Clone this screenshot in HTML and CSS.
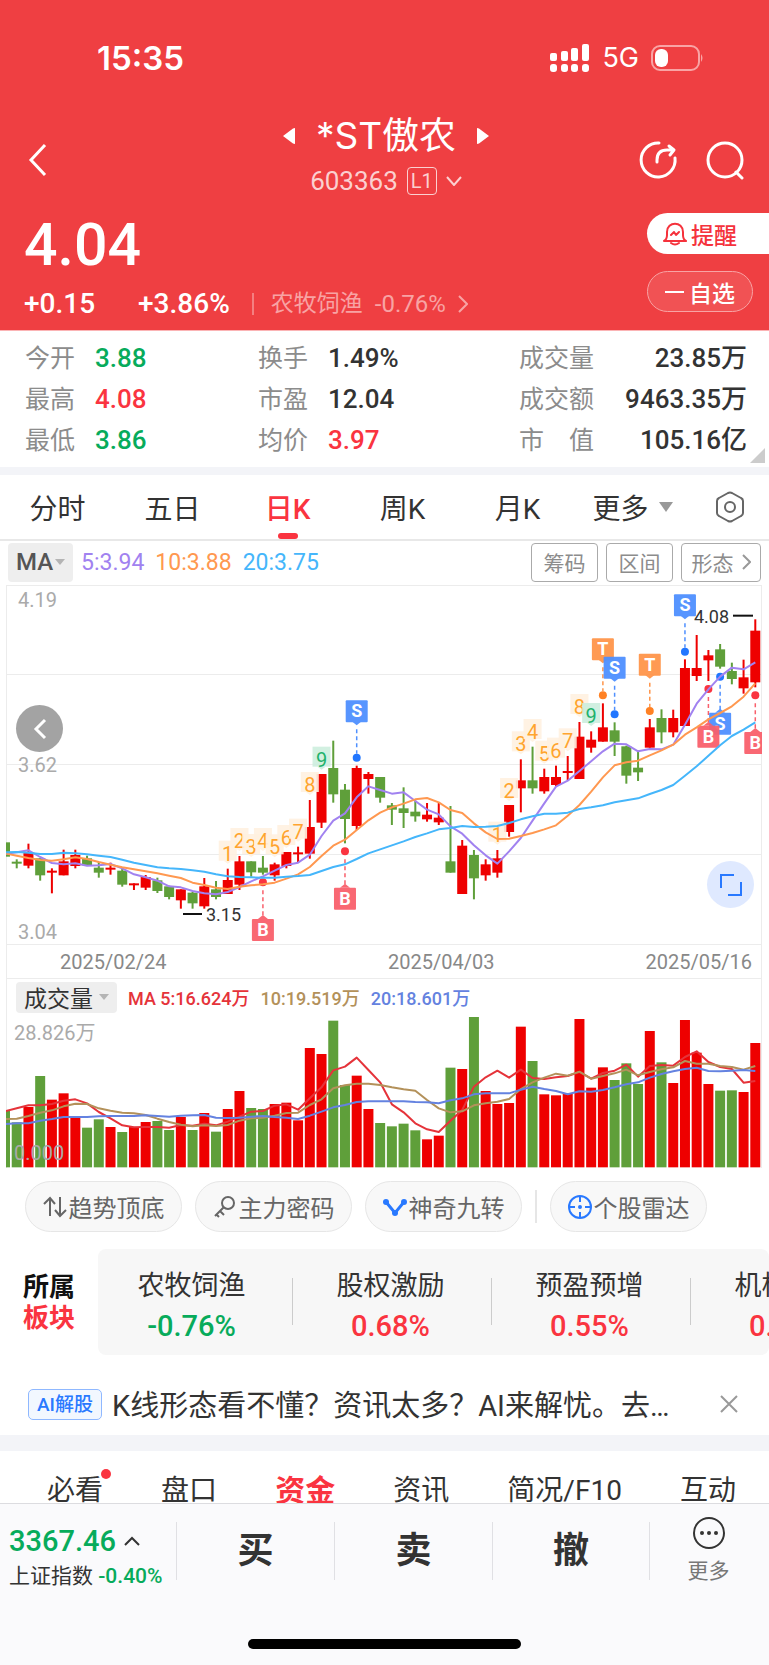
FILE: index.html
```html
<!DOCTYPE html>
<html lang="zh-CN">
  <head>
    <meta charset="utf-8" />
    <meta name="viewport" content="width=device-width, initial-scale=1.0" />
    <title>*ST傲农 603363</title>
    <link rel="stylesheet" href="styles.css">
  </head>
  <body>
    <header class="header">
      <div class="status-bar">
        <span class="clock">15:35</span>
        <div class="status-icons">
          <svg width="40" height="28" viewBox="0 0 40 28" fill="#fff">
            <rect x="0" y="9" width="7" height="8" rx="2" />
            <rect x="11" y="7" width="7" height="10" rx="2" />
            <rect x="21" y="4" width="7" height="13" rx="2" />
            <rect x="32" y="0" width="7" height="17" rx="2" />
            <rect x="0" y="20" width="7" height="8" rx="3" />
            <rect x="11" y="20" width="7" height="8" rx="3" />
            <rect x="21" y="20" width="7" height="8" rx="3" />
            <rect x="32" y="20" width="7" height="8" rx="3" />
          </svg>
          <span class="network">5G</span>
          <svg width="54" height="28" viewBox="0 0 54 28">
            <rect x="1" y="2" width="47" height="24" rx="8" fill="none" stroke="#f9a4a5" stroke-width="2" />
            <rect x="4" y="5" width="13" height="18" rx="6" fill="#fff" />
            <path d="M50 10q3 4 0 8z" fill="#f9a4a5" />
          </svg>
        </div>
      </div>

      <nav class="nav">
        <button type="button" class="icon-button" aria-label="返回">
          <svg width="22" height="36" viewBox="0 0 22 36"><path d="M18 3L4 18l14 15" fill="none" stroke="#fff" stroke-width="3" /></svg>
        </button>
        <div class="title">
          <div class="title-name">
            <svg width="14" height="18" viewBox="0 0 14 18"><path d="M13 1v16q-2 0-4-2L1 9l8-6q2-2 4-2z" fill="#fff" /></svg>
            <h1>*ST傲农</h1>
            <svg width="14" height="18" viewBox="0 0 14 18"><path d="M1 1v16q2 0 4-2l8-6-8-6q-2-2-4-2z" fill="#fff" /></svg>
          </div>
          <div class="title-code">
            <span>603363</span>
            <span class="level">L1</span>
            <svg width="16" height="10" viewBox="0 0 16 10"><path d="M1 1l7 8 7-8" fill="none" stroke="#fbd0d0" stroke-width="2" /></svg>
          </div>
        </div>
        <div class="nav-actions">
          <button type="button" class="icon-button" aria-label="分享">
            <svg width="40" height="40" viewBox="0 0 40 40" fill="none" stroke="#fff" stroke-width="3" stroke-linecap="round" stroke-linejoin="round">
              <path d="M21 3A17 17 0 1 0 37 18" />
              <path d="M19 22v-2c0-7 4-10 10-10h6M31 6l5 4-4 5" />
            </svg>
          </button>
          <button type="button" class="icon-button" aria-label="搜索">
            <svg width="40" height="40" viewBox="0 0 40 40" fill="none" stroke="#fff" stroke-width="3" stroke-linecap="round">
              <circle cx="20" cy="20" r="17" />
              <path d="M31 32l6 6" />
            </svg>
          </button>
        </div>
      </nav>

      <div class="quote">
        <div class="quote-main">
          <div class="price">4.04</div>
          <div class="change">
            <span>+0.15</span>
            <span class="change-rate">+3.86%</span>
            <a href="#sector" class="industry">
              农牧饲渔 <span class="industry-rate">-0.76%</span>
              <svg width="10" height="18" viewBox="0 0 10 18"><path d="M1 1l8 8-8 8" fill="none" stroke="#f8a3a4" stroke-width="2" /></svg>
            </a>
          </div>
        </div>
        <div class="quote-actions">
          <button type="button" class="remind">
            <svg width="24" height="24" viewBox="0 0 24 24" fill="none" stroke="#f5323c" stroke-width="2" stroke-linejoin="round" stroke-linecap="round">
              <path d="M1 19c2-1 3-3 3-6v-3c0-11 16-11 16 0v3c0 3 1 5 3 6z" />
              <path d="M8 21q4 3 8 0M8 13l3-3 2 3 3-3" />
            </svg>
            提醒
          </button>
          <button type="button" class="watch">
            <svg width="20" height="20" viewBox="0 0 20 20"><path d="M0 10h19" stroke="#fff" stroke-width="2" /></svg>
            自选
          </button>
        </div>
      </div>
    </header>

    <main>
      <section class="stats">
        <dl>
          <dt>今开</dt><dd class="down">3.88</dd>
          <dt>最高</dt><dd class="up">4.08</dd>
          <dt>最低</dt><dd class="down">3.86</dd>
        </dl>
        <dl>
          <dt>换手</dt><dd>1.49%</dd>
          <dt>市盈</dt><dd>12.04</dd>
          <dt>均价</dt><dd class="up">3.97</dd>
        </dl>
        <dl class="stats-right">
          <dt>成交量</dt><dd>23.85万</dd>
          <dt>成交额</dt><dd>9463.35万</dd>
          <dt>市　值</dt><dd>105.16亿</dd>
        </dl>
      </section>

      <div class="period-tabs">
        <button type="button">分时</button>
        <button type="button">五日</button>
        <button type="button" class="active">日K</button>
        <button type="button">周K</button>
        <button type="button">月K</button>
        <button type="button">更多<span class="triangle"></span></button>
        <button type="button" aria-label="设置">
          <svg width="30" height="32" viewBox="0 0 30 32" fill="none" stroke="#666" stroke-width="2" stroke-linejoin="round">
            <path d="M13 2q2-1 4 0l9 5q2 1 2 3v12q0 2-2 3l-9 5q-2 1-4 0l-9-5q-2-1-2-3V10q0-2 2-3z" />
            <circle cx="15" cy="16" r="5" />
          </svg>
        </button>
      </div>

      <section class="chart">
        <div class="chart-bar">
          <button type="button" class="indicator">MA<span class="triangle small"></span></button>
          <div class="averages">
            <span class="ma5">5:3.94</span>
            <span class="ma10">10:3.88</span>
            <span class="ma20">20:3.75</span>
          </div>
          <div class="chart-tools">
            <button type="button">筹码</button>
            <button type="button">区间</button>
            <button type="button" class="wide">形态
              <svg width="9" height="16" viewBox="0 0 9 16"><path d="M1 1l7 7-7 7" fill="none" stroke="#999" stroke-width="2" /></svg>
            </button>
          </div>
        </div>
        <div class="kline">
          <svg id="kline" viewBox="0 0 769 394"></svg>
          <button type="button" class="round-button prev" aria-label="向前">
            <svg width="14" height="24" viewBox="0 0 14 24"><path d="M12 3L3 12l9 9" fill="none" stroke="#fff" stroke-width="3" /></svg>
          </button>
          <button type="button" class="round-button expand" aria-label="全屏">
            <svg width="22" height="22" viewBox="0 0 22 22"><path d="M1 14V1h13M8 21h13V8" fill="none" stroke="#2979ff" stroke-width="2" /></svg>
          </button>
        </div>
        <div class="volume-bar">
          <button type="button" class="indicator">成交量<span class="triangle small"></span></button>
          <span class="vol5">MA 5:16.624万</span>
          <span class="vol10">10:19.519万</span>
          <span class="vol20">20:18.601万</span>
        </div>
        <svg id="volume" viewBox="0 0 769 151"></svg>
      </section>

      <div class="tools">
        <button type="button">
          <svg width="24" height="24" viewBox="0 0 24 24" fill="none" stroke="#666" stroke-width="2"><path d="M7 21V3M1 9l6-6 5 6M17 2v18M12 15l5 6 6-6" /></svg>
          趋势顶底
        </button>
        <button type="button">
          <svg width="24" height="24" viewBox="0 0 24 24" fill="none" stroke="#666" stroke-width="2"><circle cx="15" cy="8" r="6" /><path d="M11 12L2 21M7 16l4 4M3 19l3 3" /></svg>
          主力密码
        </button>
        <button type="button">
          <svg width="24" height="24" viewBox="0 0 24 24" fill="#2979ff"><path d="M3 7l9 11 9-11" fill="none" stroke="#2979ff" stroke-width="3" /><circle cx="3" cy="7" r="3" /><circle cx="12" cy="18" r="3" /><circle cx="21" cy="7" r="3" /></svg>
          神奇九转
        </button>
        <span class="tools-line"></span>
        <button type="button">
          <svg width="24" height="24" viewBox="0 0 24 24" fill="none" stroke="#2979ff" stroke-width="2"><circle cx="12" cy="12" r="11" /><path d="M12 1v6M12 17v6M1 12h6M17 12h6" /><circle cx="12" cy="12" r="1" /></svg>
          个股雷达
        </button>
      </div>

      <section class="sector" id="sector">
        <h2>所属<em>板块</em></h2>
        <div class="sector-list">
          <a href="#sector">农牧饲渔<span class="down">-0.76%</span></a>
          <a href="#sector">股权激励<span class="up">0.68%</span></a>
          <a href="#sector">预盈预增<span class="up">0.55%</span></a>
          <a href="#sector">机构重仓<span class="up">0.31%</span></a>
        </div>
      </section>

      <div class="ai">
        <span class="ai-tag">AI解股</span>
        <a href="#ai" class="ai-text">K线形态看不懂？资讯太多？AI来解忧。去…</a>
        <button type="button" class="icon-button" aria-label="关闭">
          <svg width="18" height="18" viewBox="0 0 18 18"><path d="M1 1l16 16M17 1L1 17" stroke="#999" stroke-width="2" /></svg>
        </button>
      </div>

      <nav class="info-tabs">
        <a href="#must" class="has-dot">必看</a>
        <a href="#depth">盘口</a>
        <a href="#funds" class="active">资金</a>
        <a href="#news">资讯</a>
        <a href="#profile">简况/F10</a>
        <a href="#talk">互动</a>
      </nav>
    </main>

    <footer class="footer">
      <div class="trade-bar">
        <a href="#index" class="index">
          <span class="index-value">3367.46
            <svg width="16" height="10" viewBox="0 0 16 10"><path d="M1 9l7-7 7 7" fill="none" stroke="#333" stroke-width="2" /></svg>
          </span>
          <span class="index-name">上证指数 <span class="index-rate down">-0.40%</span></span>
        </a>
        <button type="button" class="trade">买</button>
        <button type="button" class="trade">卖</button>
        <button type="button" class="trade">撤</button>
        <button type="button" class="more">
          <svg width="34" height="34" viewBox="0 0 34 34" fill="#333"><circle cx="17" cy="17" r="15" fill="none" stroke="#333" stroke-width="2" /><circle cx="10" cy="17" r="2" /><circle cx="17" cy="17" r="2" /><circle cx="24" cy="17" r="2" /></svg>
          更多
        </button>
      </div>
      <div class="home-indicator"></div>
    </footer>
    <script src="chart.js"></script>
  </body>
</html>
```

FILE: styles.css
```css
:root {
  --red: #fa3440;
  --green: #07ab5b;
  --header: #ef3f42;
  --text: #333;
  --gray: #8c8c8c;
  --line: #ececec;
  --band: #f3f4f8;
}

* {
  box-sizing: border-box;
}

body {
  margin: 0;
  font-family: Roboto, "Noto Sans CJK SC", sans-serif;
  font-size: 24px;
  color: var(--text);
  background-color: #fff;
}

button {
  font: inherit;
  color: inherit;
  background: none;
  border: none;
  padding: 0;
  cursor: pointer;
}

a {
  color: inherit;
  text-decoration: none;
}

svg {
  display: block;
  flex: none;
}

.up {
  color: var(--red);
}

.down {
  color: var(--green);
}

.triangle {
  border: 7px solid transparent;
  border-top: 10px solid #999;
  border-bottom: 0;
  margin-left: 10px;
}

.triangle.small {
  border-width: 5px;
  border-top-width: 6px;
  border-bottom: 0;
  border-top-color: #b4b4b4;
  margin-left: 2px;
}

/* header */
.header {
  background-color: var(--header);
  color: #fff;
  border-bottom: 1px solid #fbb4b5;
}

.status-bar {
  display: flex;
  justify-content: space-between;
  align-items: center;
  height: 112px;
  padding: 3px 64px 0 97px;
}

.clock {
  font-family: Inter, sans-serif;
  font-size: 33px;
  font-weight: 600;
}

.status-icons {
  display: flex;
  align-items: center;
  gap: 12px;
}

.network {
  font-family: Inter, sans-serif;
  font-size: 27px;
}

.nav {
  display: grid;
  grid-template-columns: 1fr auto 1fr;
  align-items: center;
  padding: 0 24px 0 27px;
}

.icon-button {
  display: flex;
}

.nav > .icon-button,
.nav-actions {
  padding-top: 5px;
}

.title-name,
.title-code {
  display: flex;
  justify-content: center;
  align-items: center;
}

.title-name {
  gap: 20px;
  height: 47px;
}

h1 {
  margin: 0;
  font-family: Inter, "Noto Sans CJK SC", sans-serif;
  font-size: 37px;
  font-weight: 400;
  line-height: 47px;
}

.title-code {
  gap: 9px;
  height: 43px;
  font-size: 26px;
  color: #fbd0d0;
}

.level {
  border: 1px solid #fbd0d0;
  border-radius: 4px;
  width: 30px;
  font-size: 20px;
  line-height: 26px;
  text-align: center;
}

.nav-actions {
  display: flex;
  justify-content: flex-end;
  gap: 27px;
}

.quote {
  display: flex;
  justify-content: space-between;
  height: 128px;
}

.quote-main {
  padding: 5px 0 0 24px;
}

.price {
  font-size: 59px;
  font-weight: 500;
  line-height: 76px;
}

.change {
  display: flex;
  align-items: center;
  font-size: 28px;
  font-weight: 500;
  line-height: 42px;
}

.change-rate {
  margin-left: 43px;
}

.industry {
  display: flex;
  align-items: center;
  gap: 12px;
  margin-left: 22px;
  padding-left: 17px;
  border-left: 2px solid #f47f81;
  font-size: 23px;
  font-weight: 400;
  line-height: 22px;
  color: #f8a3a4;
}

.industry-rate {
  font-size: 24px;
}

.quote-actions {
  width: 122px;
  padding-top: 11px;
}

.remind,
.watch {
  display: flex;
  align-items: center;
  gap: 4px;
  height: 41px;
  font-size: 23px;
  font-weight: 500;
}

.remind {
  width: 100%;
  padding-left: 16px;
  border-radius: 21px 0 0 21px;
  background-color: #fff;
  color: #f5323c;
}

.watch {
  width: 106px;
  margin-top: 17px;
  padding-left: 17px;
  border: 1px solid #f8a3a4;
  border-radius: 21px;
  background-color: #f15254;
}

/* stats */
.stats {
  position: relative;
  display: grid;
  grid-template-columns: 233fr 261fr 228fr;
  padding: 7px 22px 6px 25px;
  border-bottom: 8px solid var(--band);
}

.stats::after {
  content: "";
  position: absolute;
  right: 4px;
  bottom: 4px;
  border-left: 15px solid transparent;
  border-bottom: 15px solid #ccc;
}

.stats dl {
  display: grid;
  grid-template-columns: 70px 1fr;
  margin: 0;
  line-height: 41px;
}

.stats dt {
  font-size: 25px;
  color: var(--gray);
}

.stats dd {
  margin: 0;
  font-size: 26px;
  font-weight: 500;
}

.stats .stats-right {
  grid-template-columns: auto 1fr;
}

.stats-right dd {
  text-align: right;
}

/* period tabs */
.period-tabs {
  display: grid;
  grid-template-columns: repeat(6, 115fr) 79fr;
  height: 66px;
  border-bottom: 2px solid #e8e8e8;
  font-size: 28px;
}

.period-tabs button {
  position: relative;
  display: flex;
  align-items: center;
  justify-content: center;
}

.period-tabs .active {
  color: var(--red);
  font-weight: 500;
}

.period-tabs .active::after {
  content: "";
  position: absolute;
  bottom: 0;
  width: 20px;
  height: 6px;
  border-radius: 3px;
  background-color: var(--red);
}

/* charts */
.chart-bar {
  display: flex;
  align-items: center;
  height: 44px;
  padding: 0 8px 2px;
}

.indicator {
  display: flex;
  align-items: center;
  justify-content: center;
  border-radius: 4px;
  background-color: #eee;
}

.chart-bar .indicator {
  width: 65px;
  height: 39px;
  color: #555;
  font-weight: 500;
}

.averages {
  display: flex;
  gap: 11px;
  margin-left: 8px;
  font-size: 23px;
}

.ma5 {
  color: #a182f0;
}

.ma10 {
  color: #ff9850;
}

.ma20 {
  color: #45b6fb;
}

.chart-tools {
  display: flex;
  gap: 8px;
  margin-left: auto;
}

.chart-tools button {
  display: flex;
  align-items: center;
  justify-content: center;
  gap: 8px;
  width: 67px;
  height: 39px;
  border: 1px solid #aaa;
  border-radius: 4px;
  font-size: 21px;
  color: var(--gray);
}

.chart-tools .wide {
  width: 80px;
}

.kline {
  position: relative;
}

#kline,
#volume {
  width: 100%;
}

.round-button {
  position: absolute;
  display: flex;
  align-items: center;
  justify-content: center;
  width: 47px;
  height: 47px;
  border-radius: 50%;
}

.prev {
  left: 16px;
  top: 120px;
  background-color: #a3a3a3;
}

.expand {
  right: 15px;
  bottom: 71px;
  background-color: #dfe9ff;
}

.volume-bar {
  display: flex;
  align-items: center;
  gap: 11px;
  height: 38px;
  margin: 0 7px 0 6px;
  padding: 0 9px 2px;
  border-left: 1px solid var(--line);
  border-right: 1px solid var(--line);
  font-size: 18px;
  font-weight: 500;
}

.volume-bar .indicator {
  width: 101px;
  height: 31px;
  font-size: 23px;
  font-weight: 400;
}

.volume-bar .triangle {
  margin-left: 6px;
}

.vol5 {
  color: #e5333a;
}

.vol10 {
  color: #b3915a;
}

.vol20 {
  color: #6482e0;
}

/* tool pills */
.tools {
  display: flex;
  gap: 13px;
  padding: 13px 25px 17px;
}

.tools button {
  display: flex;
  align-items: center;
  justify-content: center;
  gap: 2px;
  width: 157px;
  height: 51px;
  border: 1px solid #e6e6e6;
  border-radius: 26px;
  background-color: #f8f8f8;
  color: #666;
}

.tools-line {
  width: 2px;
  margin: 9px 0;
  background-color: #e6e6e6;
}

/* sector */
.sector {
  display: flex;
  align-items: center;
}

.sector h2 {
  flex: none;
  width: 98px;
  margin: 0;
  padding: 2px 0 0 23px;
  font-size: 26px;
  line-height: 31px;
  color: #111;
}

.sector em {
  display: block;
  font-style: normal;
  color: var(--red);
}

.sector-list {
  display: flex;
  flex: 1;
  overflow: hidden;
  padding: 17px 0 10px;
  border-radius: 8px;
  background-color: #f7f7f7;
}

.sector-list a {
  position: relative;
  flex: none;
  width: 199px;
  padding-right: 12px;
  text-align: center;
  font-size: 27px;
  line-height: 41px;
}

.sector-list a + a::before {
  content: "";
  position: absolute;
  left: -5px;
  top: 12px;
  height: 47px;
  border-left: 1px solid #ccc;
}

.sector-list span {
  display: block;
  font-size: 29px;
  font-weight: 500;
  line-height: 38px;
}

.ai {
  display: flex;
  align-items: center;
  height: 80px;
  padding: 18px 31px 0 28px;
}

.ai-tag {
  width: 74px;
  border: 1px solid #8fb8ff;
  border-radius: 5px;
  background-color: #f2f7ff;
  color: #2979ff;
  font-size: 19px;
  font-weight: 500;
  line-height: 29px;
  text-align: center;
}

.ai-text {
  flex: 1;
  margin-left: 10px;
  padding-top: 4px;
  font-size: 29px;
  line-height: 40px;
  white-space: nowrap;
}

.info-tabs {
  display: flex;
  justify-content: space-between;
  height: 68px;
  padding: 18px 33px 0 47px;
  border-top: 16px solid var(--band);
  overflow: hidden;
  font-size: 28px;
  line-height: 44px;
}

.info-tabs .active {
  color: var(--red);
  font-size: 30px;
  font-weight: 700;
}

.has-dot {
  position: relative;
}

.has-dot::after {
  content: "";
  position: absolute;
  right: -8px;
  top: 0;
  width: 10px;
  height: 10px;
  border-radius: 50%;
  background-color: var(--red);
}

/* footer */
.footer {
  height: 162px;
  border-top: 1px solid #dcdce0;
  background-color: #fafafc;
}

.trade-bar {
  display: grid;
  grid-template-columns: 176fr 158fr 158fr 157fr 120fr;
  height: 96px;
  padding-top: 18px;
}

.trade-bar > * + * {
  height: 58px;
  border-left: 1px solid #e0e0e4;
}

.index {
  padding-left: 9px;
}

.index-value {
  display: flex;
  align-items: center;
  gap: 8px;
  font-size: 29px;
  font-weight: 500;
  line-height: 38px;
  color: var(--green);
}

.index-name {
  display: block;
  font-size: 21px;
  line-height: 32px;
  white-space: nowrap;
}

.index-rate {
  font-weight: 500;
}

.trade {
  font-size: 36px;
  font-weight: 700;
  line-height: 58px;
}

.more {
  display: flex;
  flex-direction: column;
  align-items: center;
  justify-content: center;
  gap: 6px;
  padding-right: 2px;
  font-size: 21px;
  line-height: 30px;
  color: #777;
}

.home-indicator {
  width: 273px;
  height: 10px;
  margin: 39px auto 0;
  border-radius: 5px;
  background-color: #000;
}
```

FILE: chart.js
```js
const RED = '#ee0000';
const GREEN = '#5f9f3a';
const STEP = 35.17;
const FIRST = 15;

// color, high, body top, body bottom, low (three units to a pixel)
const candles = [
  ['g', 787, 787, 830, 830], ['g', 838, 845, 849, 865], ['r', 791, 818, 857, 865], ['g', 835, 835, 886, 902],
  ['r', 865, 872, 877, 940], ['r', 809, 844, 886, 886], ['r', 809, 825, 858, 865], ['g', 827, 835, 856, 856],
  ['g', 846, 863, 878, 893], ['r', 848, 863, 867, 884], ['g', 865, 872, 914, 920], ['r', 910, 910, 914, 930],
  ['r', 885, 891, 923, 930], ['g', 893, 901, 933, 939], ['g', 917, 919, 951, 958], ['r', 928, 928, 961, 986],
  ['g', 936, 938, 970, 986], ['r', 894, 919, 979, 986], ['g', 903, 928, 951, 958], ['r', 866, 900, 942, 942],
  ['r', 828, 844, 914, 930], ['g', 844, 844, 877, 890], ['g', 828, 863, 878, 884], ['r', 848, 853, 886, 902],
  ['r', 816, 816, 858, 865], ['r', 800, 817, 821, 848], ['r', 660, 741, 821, 836], ['r', 582, 582, 728, 744],
  ['g', 482, 564, 643, 668], ['g', 612, 629, 717, 790], ['r', 557, 564, 738, 750], ['r', 576, 582, 597, 641],
  ['g', 591, 591, 653, 668], ['g', 669, 676, 689, 735], ['g', 622, 685, 699, 744], ['g', 662, 695, 709, 725],
  ['r', 669, 704, 718, 725], ['r', 667, 713, 727, 735], ['g', 678, 844, 878, 878], ['r', 780, 797, 942, 942],
  ['g', 810, 825, 895, 958], ['r', 838, 853, 886, 902], ['r', 810, 835, 878, 893], ['r', 675, 675, 756, 770],
  ['r', 538, 601, 625, 697], ['g', 500, 601, 625, 641], ['r', 566, 591, 634, 641], ['r', 557, 591, 615, 621],
  ['r', 528, 573, 577, 600], ['r', 426, 470, 597, 597], ['r', 454, 479, 503, 518], ['r', 370, 442, 485, 485],
  ['g', 427, 451, 485, 528], ['g', 497, 499, 587, 611], ['g', 512, 563, 577, 603], ['r', 417, 442, 503, 503],
  ['g', 388, 414, 457, 490], ['r', 389, 414, 457, 472], ['r', 238, 264, 438, 438], ['r', 165, 264, 288, 303],
  ['r', 210, 226, 241, 303], ['g', 192, 208, 260, 266], ['g', 248, 273, 297, 313], ['r', 239, 292, 325, 341],
  ['r', 118, 152, 307, 322]
];

const priceLines = {
  '#a182f0': [822, 817, 811, 831, 849, 853, 850, 857, 856, 852, 865, 883, 892, 902, 919, 922, 933, 940, 943, 936, 921, 904, 889, 872, 855, 848, 824, 768, 722, 700, 652, 619, 630, 641, 637, 663, 689, 703, 739, 761, 796, 826, 851, 814, 774, 722, 670, 620, 602, 573, 544, 514, 491, 493, 514, 507, 508, 494, 434, 371, 328, 290, 263, 268, 247],
  '#ff9850': [820, 827, 834, 840, 842, 838, 832, 837, 846, 854, 862, 868, 874, 880, 887, 894, 908, 915, 923, 927, 920, 916, 913, 908, 896, 883, 861, 828, 797, 779, 750, 721, 698, 682, 671, 658, 654, 667, 690, 699, 730, 757, 777, 776, 768, 759, 748, 736, 707, 675, 635, 592, 556, 547, 542, 526, 511, 494, 464, 442, 418, 399, 379, 350, 310],
  '#45b6fb': [817, 816, 818, 822, 822, 818, 820, 823, 827, 831, 839, 848, 855, 862, 865, 867, 871, 875, 883, 889, 891, 892, 893, 893, 890, 888, 885, 873, 861, 853, 837, 820, 808, 796, 784, 771, 760, 748, 744, 738, 741, 740, 738, 729, 718, 709, 701, 701, 698, 687, 682, 676, 667, 661, 655, 642, 630, 615, 587, 559, 527, 496, 468, 449, 427]
};

const volumes = [407, 442, 396, 303, 374, 355, 428, 458, 433, 456, 471, 456, 441, 438, 465, 426, 465, 414, 470, 402, 348, 399, 402, 387, 383, 436, 219, 237, 137, 330, 302, 402, 444, 454, 446, 466, 493, 482, 278, 282, 126, 348, 387, 384, 155, 258, 358, 361, 355, 132, 338, 277, 315, 265, 327, 168, 262, 324, 135, 233, 327, 347, 346, 351, 204];

const volumeLines = {
  '#e5333a': [409, 400, 391, 391, 387, 377, 373, 385, 411, 430, 451, 457, 456, 456, 458, 450, 452, 446, 451, 440, 425, 410, 408, 392, 388, 404, 370, 337, 286, 275, 248, 285, 322, 388, 412, 445, 463, 471, 437, 405, 335, 307, 287, 308, 284, 309, 312, 307, 303, 291, 311, 294, 287, 269, 305, 273, 270, 272, 246, 229, 261, 276, 282, 323, 318],
  '#b3915a': [432, 431, 423, 413, 406, 394, 386, 387, 400, 407, 413, 415, 420, 431, 441, 449, 454, 451, 453, 450, 437, 430, 428, 422, 414, 413, 390, 373, 340, 331, 326, 326, 330, 337, 343, 347, 375, 400, 412, 409, 391, 385, 380, 372, 342, 322, 308, 296, 302, 290, 311, 303, 295, 284, 301, 291, 283, 277, 258, 266, 266, 273, 276, 284, 273],
  '#6482e0': [447, 445, 445, 437, 432, 426, 426, 426, 424, 423, 423, 423, 421, 423, 425, 422, 421, 420, 428, 429, 428, 425, 423, 426, 428, 432, 422, 410, 397, 390, 381, 379, 379, 379, 379, 381, 382, 385, 376, 370, 358, 355, 355, 355, 344, 335, 342, 348, 358, 349, 350, 345, 337, 328, 322, 308, 297, 289, 282, 278, 288, 289, 287, 285, 288]
};

// candle index, count, top of the tag
const counts = [
  [19, 1, 782], [20, 2, 744], [21, 3, 762], [22, 4, 744], [23, 5, 763], [24, 6, 735], [25, 7, 716], [26, 8, 576], [27, 9, 500],
  [42, 1, 725], [43, 2, 594], [44, 3, 454], [45, 4, 417], [46, 5, 482], [47, 6, 473], [48, 7, 445], [49, 8, 342], [50, 9, 369]
];

// candle index, letter, top of the label, dot
const signals = [
  [22, 'B', 1017, 907], [29, 'B', 923, 814], [30, 'S', 361, 533], [51, 'T', 175, 346], [52, 'S', 230, 403],
  [55, 'T', 221, 393], [58, 'S', 43, 215], [61, 'S', 398, 290], [60, 'B', 437, 327], [64, 'B', 456, 346]
];

const signalColors = {
  B: ['#f9606c', '#fa3440'],
  S: ['#4f90ff', '#2176ff'],
  T: ['#ff954a', '#ff8124']
};

const centerX = (i) => (FIRST + STEP * i) / 3;

function rect(x, y, width, height, fill, extra = '') {
  return `<rect x="${x}" y="${y}" width="${width}" height="${height}" fill="${fill}" ${extra}/>`;
}

function text(x, y, size, fill, content, extra = '') {
  return `<text x="${x}" y="${y}" font-size="${size}" fill="${fill}" ${extra}>${content}</text>`;
}

function drawLines(lines, top) {
  return Object.entries(lines).map(([color, values]) => {
    const points = values.map((v, i) => `${centerX(i)},${(v - top) / 3}`).join(' ');
    return `<polyline points="${points}" fill="none" stroke="${color}" stroke-width="2" stroke-linejoin="round"/>`;
  }).join('');
}

function drawKline() {
  const y = (v) => (v - 15) / 3;
  let html = '<clipPath id="frame"><rect x="6" y="0" width="756" height="394"/></clipPath>';

  for (const line of [15, 283, 552, 822, 1092, 1194]) {
    html += rect(6, Math.round(y(line)), 756, 1, '#ececec');
  }
  html += rect(6, 0, 1, 394, '#ececec') + rect(761, 0, 1, 394, '#ececec');

  html += '<g clip-path="url(#frame)">';
  candles.forEach(([color, high, top, bottom, low], i) => {
    const fill = color === 'r' ? RED : GREEN;
    html += rect(centerX(i) - 1, y(high), 2, (low - high) / 3, fill);
    html += rect(centerX(i) - 5, y(top), 10, Math.max(2, (bottom - top) / 3), fill);
  });

  for (const [i, count, top] of counts) {
    const color = count === 9 ? '#1fb26c' : '#ffa42e';
    const back = count === 9 ? '#cdeede' : '#fff1e0';
    const x = centerX(i);
    html += `<g opacity="0.9">${rect(x - 9, y(top), 18, 20, back)}<path d="M${x - 4} ${y(top) + 20}h8l-4 3z" fill="${back}"/></g>`;
    html += text(x, y(top) + 20, 20, color, count, 'text-anchor="middle"');
  }

  let marks = '';
  for (const [i, letter, top, dot] of signals) {
    const [back, dotColor] = signalColors[letter];
    const x = centerX(i);
    const boxY = y(top);
    const below = top > dot;
    const tip = below ? `M${x - 5} ${boxY}l5-4 5 4z` : `M${x - 5} ${boxY + 21}l5 4 5-4z`;
    const start = below ? y(dot) + 8 : boxY + 29;
    const end = below ? boxY - 3 : y(dot) - 4;
    html += `<circle cx="${x}" cy="${y(dot)}" r="4" fill="${dotColor}"/>`;
    html += `<path d="M${x} ${start}V${end}" stroke="${back}" stroke-width="1.5" stroke-dasharray="4 3"/>`;
    marks += `<g opacity="0.95">${rect(x - 11, boxY, 22, 22, back, 'rx="1"')}<path d="${tip}" fill="${back}"/></g>`;
    marks += text(x, boxY + 17, 18, '#fff', letter, 'text-anchor="middle" font-weight="700"');
  }
  html += marks + drawLines(priceLines, 15) + '</g>';

  html += text(18, y(80), 20, '#aaa', '4.19') + text(18, y(577), 20, '#aaa', '3.62') + text(18, y(1076), 20, '#aaa', '3.04');
  html += rect(183, y(999), 19, 2, '#111') + text(206, y(1023), 18, '#333', '3.15');
  html += rect(733, y(104), 20, 2, '#111') + text(694, y(130), 18, '#333', '4.08');
  html += text(60, y(1168), 20, '#888', '2025/02/24') + text(388, y(1168), 20, '#888', '2025/04/03');
  html += text(752, y(1168), 20, '#888', '2025/05/16', 'text-anchor="end"');
  document.getElementById('kline').innerHTML = html;
}

function drawVolume() {
  let html = '<clipPath id="volume-frame"><rect x="6" y="0" width="756" height="151"/></clipPath><g clip-path="url(#volume-frame)">';
  html += rect(6, 0, 1, 151, '#ececec') + rect(761, 0, 1, 151, '#ececec');
  volumes.forEach((v, i) => {
    html += rect(centerX(i) - 5, (v - 126) / 3, 10, (577 - v) / 3, candles[i][0] === 'r' ? RED : GREEN);
  });
  html += drawLines(volumeLines, 126) + '</g>';
  html += text(14, 23, 20, '#aaa', '28.826万') + text(14, 143, 20, '#aaa', '0.000');
  document.getElementById('volume').innerHTML = html;
}

drawKline();
drawVolume();
```
